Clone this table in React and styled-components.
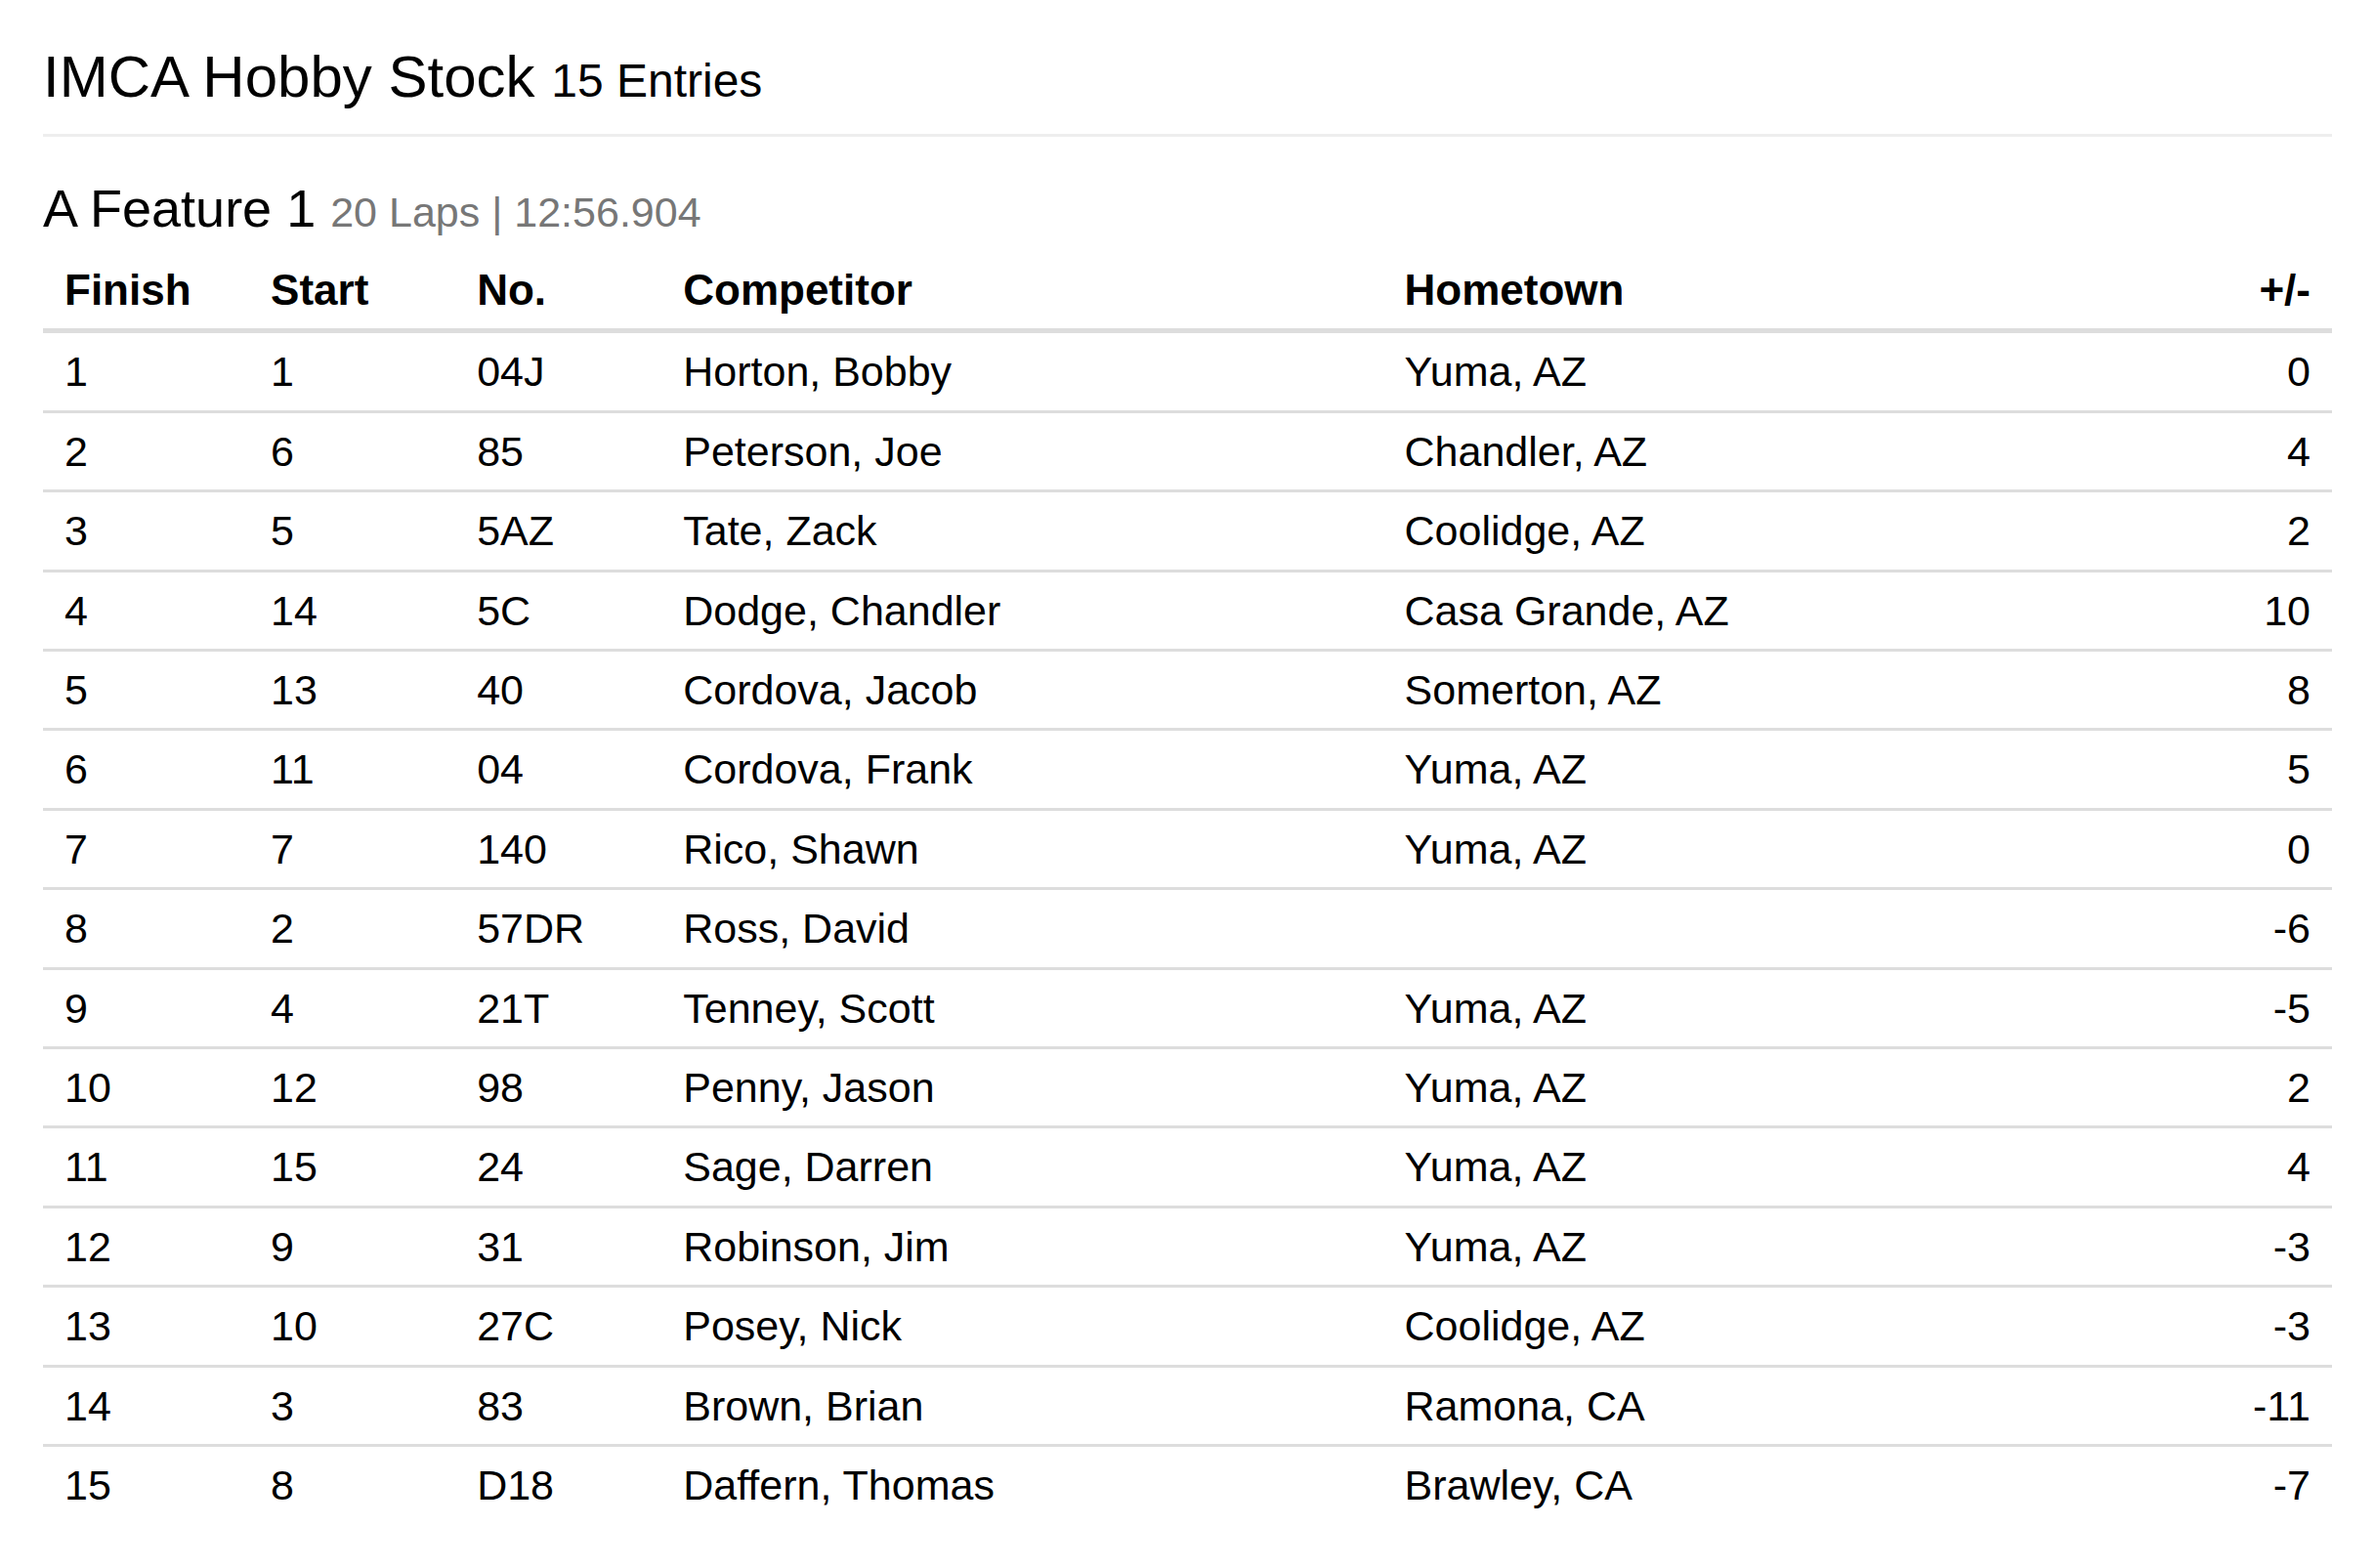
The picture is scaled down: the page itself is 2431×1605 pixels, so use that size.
import React from 'react';
import styled, { createGlobalStyle } from 'styled-components';

const GlobalStyle = createGlobalStyle`
  html, body {
    margin: 0;
    padding: 0;
    background: #fff;
  }
  body {
    font-family: "Liberation Sans", Arial, Helvetica, sans-serif;
    color: #000;
  }
`;

const results = [
  [1, 1, '04J', 'Horton, Bobby', 'Yuma, AZ', 0],
  [2, 6, '85', 'Peterson, Joe', 'Chandler, AZ', 4],
  [3, 5, '5AZ', 'Tate, Zack', 'Coolidge, AZ', 2],
  [4, 14, '5C', 'Dodge, Chandler', 'Casa Grande, AZ', 10],
  [5, 13, '40', 'Cordova, Jacob', 'Somerton, AZ', 8],
  [6, 11, '04', 'Cordova, Frank', 'Yuma, AZ', 5],
  [7, 7, '140', 'Rico, Shawn', 'Yuma, AZ', 0],
  [8, 2, '57DR', 'Ross, David', '', -6],
  [9, 4, '21T', 'Tenney, Scott', 'Yuma, AZ', -5],
  [10, 12, '98', 'Penny, Jason', 'Yuma, AZ', 2],
  [11, 15, '24', 'Sage, Darren', 'Yuma, AZ', 4],
  [12, 9, '31', 'Robinson, Jim', 'Yuma, AZ', -3],
  [13, 10, '27C', 'Posey, Nick', 'Coolidge, AZ', -3],
  [14, 3, '83', 'Brown, Brian', 'Ramona, CA', -11],
  [15, 8, 'D18', 'Daffern, Thomas', 'Brawley, CA', -7],
];

const Page = styled.div`
  padding: 46px 44px 40px;
`;

const ClassHeader = styled.div`
  padding-bottom: 21px;
  border-bottom: 3px solid #eee;
`;

const ClassTitle = styled.h1`
  margin: 0;
  font-size: 60px;
  line-height: 66px;
  font-weight: 400;
  color: #000;
`;

const Entries = styled.small`
  font-size: 48px;
  font-weight: 400;
  color: #000;
`;

const RaceTitle = styled.h2`
  margin: 43px 0 0;
  font-size: 54px;
  line-height: 60px;
  font-weight: 400;
  color: #000;
`;

const RaceMeta = styled.small`
  font-size: 43px;
  font-weight: 400;
  color: #777;
`;

const Table = styled.table`
  width: 100%;
  margin-top: 11px;
  border-collapse: collapse;
  table-layout: fixed;
  font-size: 43px;
`;

const HeadCell = styled.th`
  padding: 14px 22px;
  line-height: 50.4px;
  font-size: 44px;
  font-weight: 700;
  text-align: ${(p) => (p.$right ? 'right' : 'left')};
  border-bottom: 5px solid #ddd;
  white-space: nowrap;
`;

const Row = styled.tr`
  & + & td {
    border-top: 3px solid #ddd;
  }
`;

const Cell = styled.td`
  padding: 14px 22px;
  line-height: 50.4px;
  text-align: ${(p) => (p.$right ? 'right' : 'left')};
  white-space: nowrap;
`;

const columns = [
  { label: 'Finish', width: 211 },
  { label: 'Start', width: 211 },
  { label: 'No.', width: 211 },
  { label: 'Competitor', width: 738 },
  { label: 'Hometown', width: 771 },
  { label: '+/-', width: 200, right: true },
];

const App = () => {
  return (
    <>
      <GlobalStyle />
      <Page>
        <ClassHeader>
          <ClassTitle>
            IMCA Hobby Stock <Entries>15 Entries</Entries>
          </ClassTitle>
        </ClassHeader>
        <RaceTitle>
          A Feature 1 <RaceMeta>20 Laps | 12:56.904</RaceMeta>
        </RaceTitle>
        <Table>
          <colgroup>
            {columns.map((c) => (
              <col key={c.label} style={{ width: c.width }} />
            ))}
          </colgroup>
          <thead>
            <tr>
              {columns.map((c) => (
                <HeadCell key={c.label} $right={c.right}>
                  {c.label}
                </HeadCell>
              ))}
            </tr>
          </thead>
          <tbody>
            {results.map((r) => (
              <Row key={r[0]}>
                <Cell>{r[0]}</Cell>
                <Cell>{r[1]}</Cell>
                <Cell>{r[2]}</Cell>
                <Cell>{r[3]}</Cell>
                <Cell>{r[4]}</Cell>
                <Cell $right>{r[5]}</Cell>
              </Row>
            ))}
          </tbody>
        </Table>
      </Page>
    </>
  );
};

export default App;
